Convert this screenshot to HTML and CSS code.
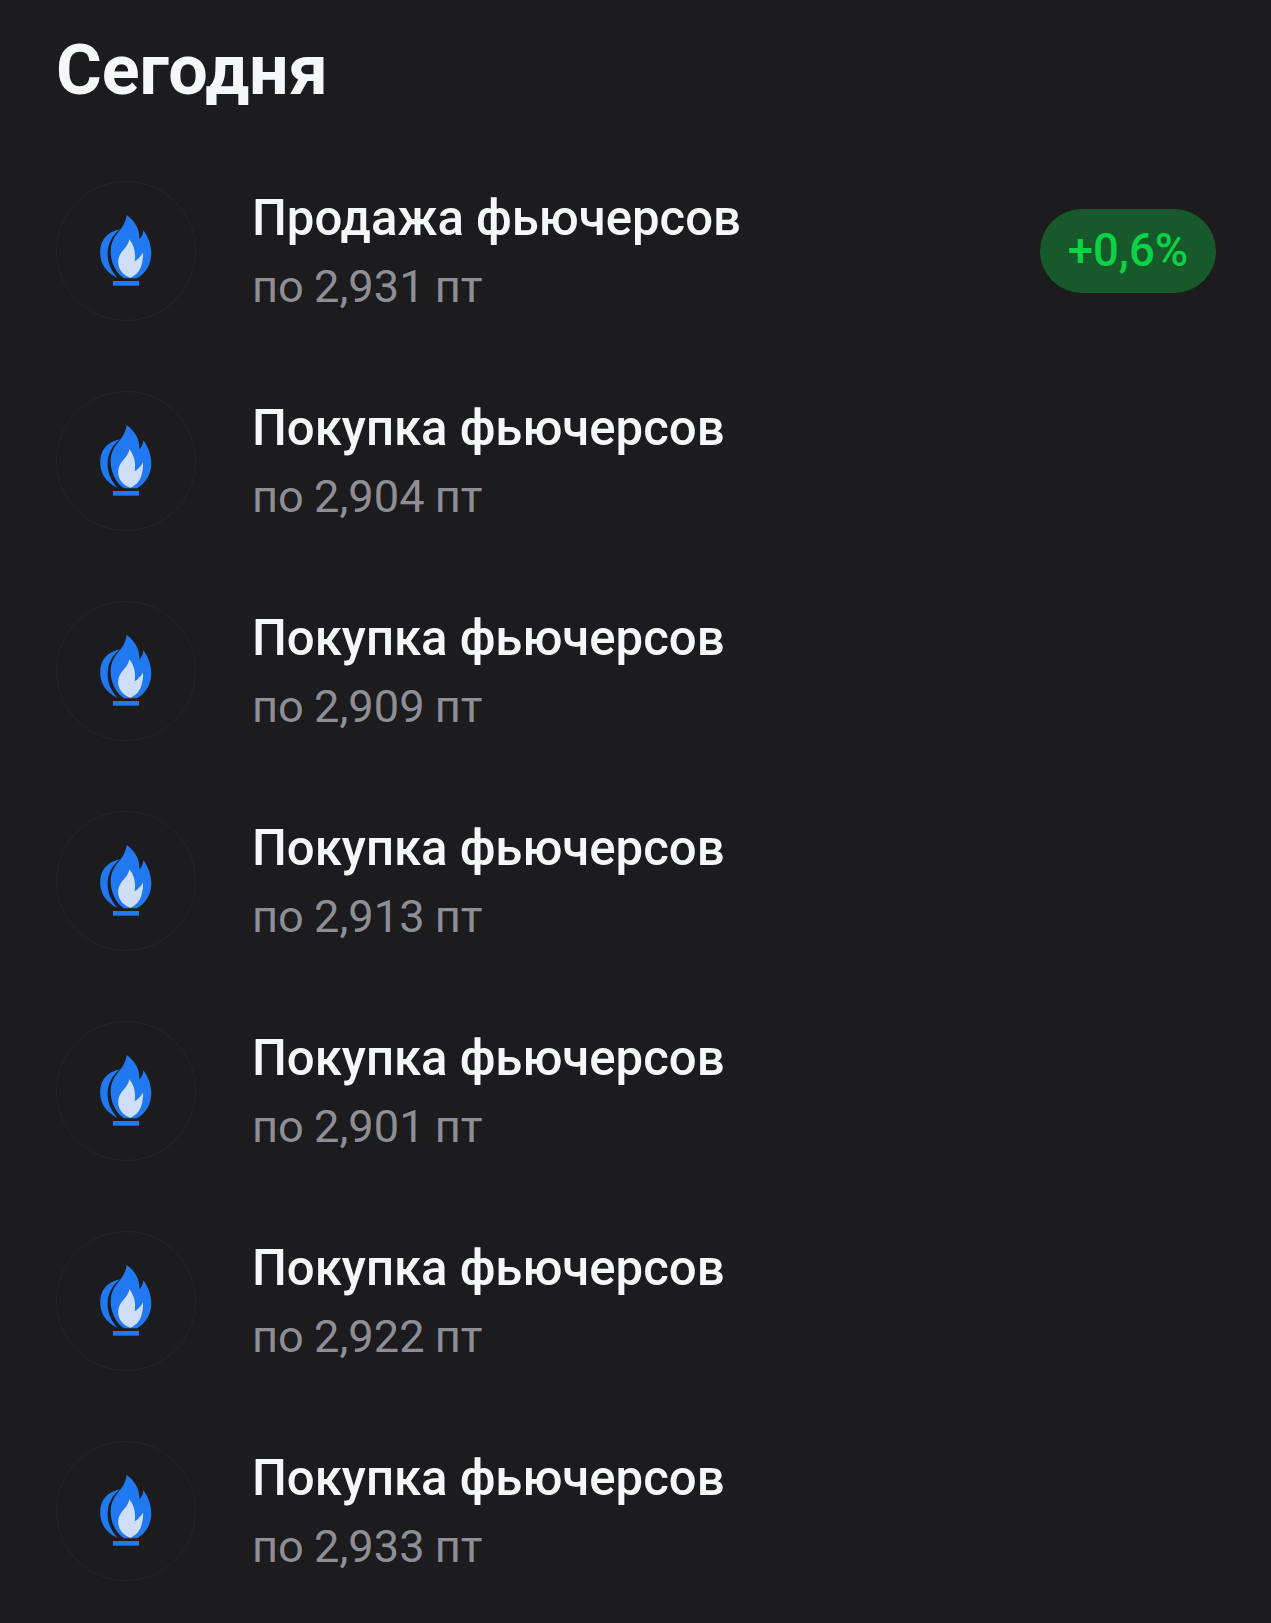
FILE: index.html
```html
<!DOCTYPE html>
<html lang="ru">

<head>
    <meta charset="UTF-8">
    <meta name="viewport" content="width=device-width, initial-scale=1.0">
    <link rel="stylesheet" href="styles.css">
</head>

<body>
    <svg class="sprite" width="0" height="0">
        <symbol id="flame" viewBox="48 33 420 420">
            <path fill="#2079f0" d="M240 178C203 186 184 208 181 238C177 277 197 308 232 323C212 300 201 275 203 245C205 218 218 196 240 178Z" />
            <path fill="#2079f0" d="M260 135C257 158 246 174 232 190C216 209 209 232 213 258C217 288 232 312 252 325L290 325C316 312 333 284 334 252C334 226 325 201 310 181C309 193 305 201 298 208C300 178 285 153 260 135Z" />
            <path fill="#cddef6" d="M268 208C265 226 253 236 243 249C234 262 232 279 238 294C243 307 255 318 271 323C286 317 299 304 304 287C308 274 310 260 309 247C304 258 295 267 284 274C288 251 283 226 268 208Z" />
            <rect fill="#2079f0" x="219" y="333" width="78" height="14" />
        </symbol>
    </svg>

    <div class="screen">
        <h1 class="day-title">Сегодня</h1>

        <div class="deal-list">
            <div class="deal">
                <div class="deal-icon"><svg class="flame"><use href="#flame" /></svg></div>
                <div class="deal-text">
                    <div class="deal-name">Продажа фьючерсов</div>
                    <div class="deal-price">по 2,931 пт</div>
                </div>
                <div class="deal-badge">+0,6%</div>
            </div>
            <div class="deal">
                <div class="deal-icon"><svg class="flame"><use href="#flame" /></svg></div>
                <div class="deal-text">
                    <div class="deal-name">Покупка фьючерсов</div>
                    <div class="deal-price">по 2,904 пт</div>
                </div>
            </div>
            <div class="deal">
                <div class="deal-icon"><svg class="flame"><use href="#flame" /></svg></div>
                <div class="deal-text">
                    <div class="deal-name">Покупка фьючерсов</div>
                    <div class="deal-price">по 2,909 пт</div>
                </div>
            </div>
            <div class="deal">
                <div class="deal-icon"><svg class="flame"><use href="#flame" /></svg></div>
                <div class="deal-text">
                    <div class="deal-name">Покупка фьючерсов</div>
                    <div class="deal-price">по 2,913 пт</div>
                </div>
            </div>
            <div class="deal">
                <div class="deal-icon"><svg class="flame"><use href="#flame" /></svg></div>
                <div class="deal-text">
                    <div class="deal-name">Покупка фьючерсов</div>
                    <div class="deal-price">по 2,901 пт</div>
                </div>
            </div>
            <div class="deal">
                <div class="deal-icon"><svg class="flame"><use href="#flame" /></svg></div>
                <div class="deal-text">
                    <div class="deal-name">Покупка фьючерсов</div>
                    <div class="deal-price">по 2,922 пт</div>
                </div>
            </div>
            <div class="deal">
                <div class="deal-icon"><svg class="flame"><use href="#flame" /></svg></div>
                <div class="deal-text">
                    <div class="deal-name">Покупка фьючерсов</div>
                    <div class="deal-price">по 2,933 пт</div>
                </div>
            </div>
        </div>
    </div>
</body>

</html>
```

FILE: styles.css
```css
html, body {
    margin: 0;
    padding: 0;
    background-color: #1c1c1e;
}

body {
    font-family: Roboto, 'Liberation Sans', sans-serif;
    color: #f6f7f8;
}

.sprite {
    display: block;
}

.screen {
    height: 1623px;
    padding: 0 55px 0 56px;
    box-sizing: border-box;
    overflow: hidden;
}

.day-title {
    margin: 0;
    padding-top: 30px;
    height: 181px;
    box-sizing: border-box;
    font-size: 70px;
    line-height: 80px;
    font-weight: 700;
}

.deal-list {
    display: flex;
    flex-direction: column;
    gap: 70px;
}

.deal {
    display: flex;
    align-items: center;
    height: 140px;
}

.deal-icon {
    width: 140px;
    height: 140px;
    flex-shrink: 0;
    margin-right: 56px;
    border: 1px solid #252527;
    border-radius: 50%;
    box-sizing: border-box;
}

.flame {
    display: block;
    width: 140px;
    height: 140px;
    margin: -1px;
}

.deal-text {
    flex: 1;
    padding-top: 4px;
}

.deal-name {
    font-size: 49.1px;
    line-height: 68px;
    font-weight: 500;
}

.deal-price {
    font-size: 45.2px;
    line-height: 70px;
    word-spacing: -1px;
    color: #8e8e96;
}

.deal-badge {
    width: 176px;
    height: 84px;
    border-radius: 42px;
    background-color: #17592a;
    color: #0cd246;
    font-size: 45.5px;
    line-height: 84px;
    font-weight: 500;
    text-align: center;
}
```
